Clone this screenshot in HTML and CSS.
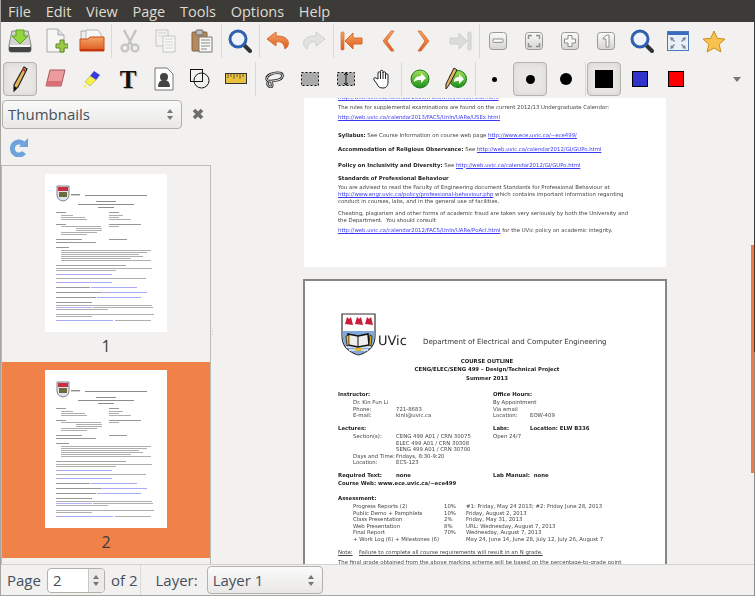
FILE: index.html
```html
<!DOCTYPE html>
<html>
<head>
<title>Xournal</title>
<link rel="stylesheet" href="styles.css">
</head>
<body>
<svg class="defs" width="0" height="0">
  <defs>
    <linearGradient id="orange" x1="0" y1="0" x2="0" y2="1"><stop offset="0" stop-color="#f6a568"/><stop offset="1" stop-color="#dd5a1c"/></linearGradient>
    <linearGradient id="btn" x1="0" y1="0" x2="0" y2="1"><stop offset="0" stop-color="#fbfbfa"/><stop offset="1" stop-color="#d5d4d1"/></linearGradient>
    <linearGradient id="green" x1="0" y1="0" x2="0" y2="1"><stop offset="0" stop-color="#a6e05a"/><stop offset="1" stop-color="#1a8f1a"/></linearGradient>
    <symbol id="thumb" viewBox="0 0 122 158">
      <rect width="122" height="158" fill="#fff"/>
      <path d="M12 12h12v9q0 5-6 6q-6-1-6-6z" fill="#dfe4ee" stroke="#555" stroke-width=".7"/>
      <rect x="13" y="13" width="10" height="4" fill="#c9303f"/>
      <rect x="14" y="18" width="8" height="5" fill="#6f6a3c"/>
      <g fill="#8c8c8c">
        <rect x="26" y="20" width="9" height="1.4"/><rect x="40" y="21" width="62" height="1"/>
        <rect x="51" y="27" width="20" height="1"/><rect x="33" y="30" width="56" height="1"/><rect x="53" y="33" width="16" height="1"/>
        <rect x="11" y="38" width="10" height=".9"/><rect x="64" y="38" width="10" height=".9"/>
        <rect x="16" y="41" width="12" height=".7"/><rect x="64" y="41" width="14" height=".7"/>
        <rect x="16" y="43" width="24" height=".7"/><rect x="64" y="43" width="10" height=".7"/>
        <rect x="16" y="45" width="26" height=".7"/><rect x="64" y="45" width="22" height=".7"/>
        <rect x="11" y="50" width="10" height=".9"/><rect x="64" y="50" width="32" height=".9"/>
        <rect x="16" y="52" width="40" height=".7"/><rect x="64" y="52" width="10" height=".7"/>
        <rect x="31" y="54" width="26" height=".7"/><rect x="31" y="56" width="26" height=".7"/>
        <rect x="16" y="58" width="36" height=".7"/><rect x="16" y="60" width="26" height=".7"/>
        <rect x="11" y="65" width="26" height=".9"/><rect x="64" y="65" width="18" height=".9"/>
        <rect x="11" y="68" width="40" height=".9"/><rect x="11" y="73" width="13" height=".9"/>
        <rect x="16" y="76" width="90" height=".7"/><rect x="16" y="78" width="86" height=".7"/>
        <rect x="16" y="80" width="78" height=".7"/><rect x="16" y="82" width="82" height=".7"/>
        <rect x="16" y="84" width="70" height=".7"/><rect x="16" y="86" width="90" height=".7"/>
        <rect x="11" y="91" width="70" height=".8"/><rect x="11" y="94" width="96" height=".7"/>
        <rect x="11" y="96" width="60" height=".7"/>
        <rect x="11" y="104" width="90" height=".7"/>
        <rect x="11" y="113" width="34" height=".9"/><rect x="11" y="118" width="46" height=".9"/><rect x="11" y="123" width="40" height=".9"/>
        <rect x="11" y="128" width="36" height=".9"/>
        <rect x="11" y="131" width="96" height=".7"/><rect x="48" y="133" width="60" height=".7"/><rect x="11" y="135" width="52" height=".7"/>
        <rect x="11" y="140" width="98" height=".7"/><rect x="11" y="142" width="36" height=".7"/>
        <rect x="70" y="146" width="36" height=".7"/>
      </g>
      <g fill="#a9a9fa">
        <rect x="11" y="100" width="56" height="1"/><rect x="11" y="108" width="56" height="1"/>
        <rect x="46" y="113" width="46" height="1"/><rect x="56" y="118" width="46" height="1"/><rect x="52" y="123" width="44" height="1"/>
        <rect x="11" y="133" width="36" height=".9"/><rect x="11" y="146" width="57" height="1"/>
      </g>
    </symbol>
  </defs>
</svg>

<div class="app">
  <div class="menubar">
    <span>File</span><span>Edit</span><span>View</span><span>Page</span><span>Tools</span><span>Options</span><span>Help</span>
  </div>

  <div class="toolbar">
    <div class="tool"><svg width="26" height="26"><path d="M5 3h16l3 14v5a2 2 0 0 1-2 2H4a2 2 0 0 1-2-2v-5z" fill="#d3d4cf" stroke="#8a8b86"/><rect x="2" y="18" width="22" height="6" rx="2" fill="#444"/><rect x="3" y="17" width="20" height="2" fill="#f4f4f2"/><path d="M9 2h8v6h4l-8 8-8-8h4z" fill="#93d63f" stroke="#5f9e1c"/></svg></div>
    <div class="tool"><svg width="24" height="26"><path d="M3 1h11l6 6v17H3z" fill="#f6f6f5" stroke="#aaa"/><path d="M14 1v6h6" fill="#ddd" stroke="#aaa"/><path d="M16 12h4v4h4v4h-4v4h-4v-4h-4v-4h4z" fill="#9ccb4a" stroke="#5f8c1f"/></svg></div>
    <div class="tool"><svg width="26" height="24"><path d="M2 2h8l2 3v10H2z" fill="#ededeb" stroke="#aaa"/><path d="M7 1h12l3 4v10H7z" fill="#f8f8f6" stroke="#b5b5b0"/><path d="M1 10h8l2-2h14v14H1z" fill="url(#orange)" stroke="#c94a16"/><rect x="1" y="20" width="24" height="2" fill="#c8360f"/></svg></div>
    <i class="sep"></i>
    <div class="tool"><svg width="20" height="24" fill="none" stroke="#c4c4c1" stroke-width="2.4"><path d="M4 1l8 15M16 1L8 16"/><circle cx="5" cy="19" r="3.4"/><circle cx="15" cy="19" r="3.4"/></svg></div>
    <div class="tool"><svg width="22" height="24"><path d="M1 1h12v16H1z" fill="#f2f2f0" stroke="#c4c4c1"/><path d="M8 7h12v16H8z" fill="#f8f8f6" stroke="#c4c4c1"/><path d="M3 4h8M3 7h4M10 10h8M10 13h8M10 16h8M10 19h8" stroke="#d2d2cf"/></svg></div>
    <div class="tool"><svg width="22" height="24"><rect x="1" y="3" width="15" height="19" rx="1" fill="#b5895c" stroke="#80603c"/><rect x="5" y="1" width="7" height="5" rx="1" fill="#bdbdba" stroke="#666"/><path d="M8 8h13v15H8z" fill="#f8f8f6" stroke="#777"/><path d="M10 11h9M10 14h9M10 17h9M10 20h6" stroke="#888"/></svg></div>
    <i class="sep"></i>
    <div class="tool"><svg width="24" height="24"><path d="M15 15l7 7" stroke="#333" stroke-width="4" stroke-linecap="round"/><circle cx="10" cy="10" r="8" fill="#eef3fb" stroke="#2f5fb0" stroke-width="3"/></svg></div>
    <i class="sep"></i>
    <div class="tool"><svg width="24" height="20"><path d="M10 1L1 8l9 7v-4c5-1 8 1 9 7 3-2 4-5 3-8-2-4-6-5-12-5z" fill="url(#orange)" stroke="#d86a2c"/></svg></div>
    <div class="tool"><svg width="24" height="20"><path d="M14 1l9 7-9 7v-4c-5-1-8 1-9 7-3-2-4-5-3-8 2-4 6-5 12-5z" fill="#e2e2df" stroke="#cfcfcc"/></svg></div>
    <i class="sep"></i>
    <div class="tool"><svg width="24" height="20"><rect x="1" y="1" width="3" height="18" rx="1" fill="url(#orange)" stroke="#d86a2c" stroke-width=".7"/><path d="M13 2L5 10l8 8v-5h9V7h-9z" fill="url(#orange)" stroke="#d86a2c"/></svg></div>
    <div class="tool"><svg width="14" height="22"><path d="M10 1L2 11l8 10h3L6 11l7-10z" fill="url(#orange)" stroke="#d86a2c" stroke-width=".8"/></svg></div>
    <div class="tool"><svg width="14" height="22"><path d="M4 1l8 10-8 10H1l7-10L1 1z" fill="url(#orange)" stroke="#d86a2c" stroke-width=".8"/></svg></div>
    <div class="tool"><svg width="24" height="20"><rect x="20" y="1" width="3" height="18" rx="1" fill="#dcdcd9" stroke="#cfcfcc"/><path d="M11 2l8 8-8 8v-5H2V7h9z" fill="#dcdcd9" stroke="#cfcfcc"/></svg></div>
    <i class="sep"></i>
    <div class="tool"><svg width="18" height="18"><rect x=".5" y=".5" width="17" height="17" rx="3" fill="url(#btn)" stroke="#999"/><rect x="4" y="7" width="10" height="3.4" rx=".5" fill="#fafafa" stroke="#8e8e8b"/></svg></div>
    <div class="tool"><svg width="18" height="18" fill="none"><rect x=".5" y=".5" width="17" height="17" rx="3" fill="url(#btn)" stroke="#999"/><path d="M7 3.500H3.500V7M11 3.500h3.500V7M7 14.500H3.500V11M11 14.500h3.500V11" stroke="#8e8e8b" stroke-width="1.400"/></svg></div>
    <div class="tool"><svg width="18" height="18"><rect x=".5" y=".5" width="17" height="17" rx="3" fill="url(#btn)" stroke="#999"/><path d="M7 3.500h4V7h3.500v4H11v3.500H7V11H3.500V7H7z" fill="#fafafa" stroke="#8e8e8b"/></svg></div>
    <div class="tool"><svg width="18" height="18"><rect x=".5" y=".5" width="17" height="17" rx="3" fill="url(#btn)" stroke="#999"/><path d="M6 6l4-3h2v12H9V7H6z" fill="#fafafa" stroke="#8e8e8b"/></svg></div>
    <div class="tool"><svg width="24" height="24"><path d="M15 15l7 7" stroke="#333" stroke-width="4" stroke-linecap="round"/><circle cx="10" cy="10" r="8" fill="#eef3fb" stroke="#2f5fb0" stroke-width="3"/></svg></div>
    <div class="tool"><svg width="22" height="20"><rect x=".5" y=".5" width="21" height="19" fill="#eaf0f8" stroke="#4a78b8"/><rect x="1" y="1" width="20" height="3" fill="#3a6cc0"/><path d="M3 6l4 1-1 1 2 2-1 1-2-2-1 1zM19 6l-1 4-1-1-2 2-1-1 2-2-1-1zM3 18l1-4 1 1 2-2 1 1-2 2 1 1zM19 18l-4-1 1-1-2-2 1-1 2 2 1-1z" fill="#7c8a99"/></svg></div>
    <div class="tool"><svg width="24" height="23"><path d="M12 1l3.300 7.300 7.700.8-5.800 5.200 1.700 7.700-6.900-4-6.900 4 1.700-7.700L1 9.100l7.700-.8z" fill="#f8c24e" stroke="#c98e1c"/></svg></div>
  </div>

  <div class="toolbar">
    <div class="tool active"><svg width="16" height="26"><path d="M12 1l3 2-9 18-4 4 0-6z" fill="#e8b45c" stroke="#222" stroke-width="1.200"/><path d="M11 2l3 2-1 2-3-2z" fill="#b33"/><path d="M2 25l0-5 3 2z" fill="#111"/></svg></div>
    <div class="tool"><svg width="22" height="22"><path d="M5 2h15l-4 16H1z" fill="#eb9a9e" stroke="#a55"/><path d="M1 18l1-5h15l-1 5z" fill="#d96f74"/></svg></div>
    <div class="tool"><svg width="20" height="20"><path d="M12 2l6 4-4 5-6-4z" fill="#3a3ad8"/><path d="M8 7l6 4-6 6-5-4z" fill="#f8f040" stroke="#999" stroke-width=".5"/><path d="M2 15l-1 3 4 1z" fill="#f8f040"/></svg></div>
    <div class="tool"><span class="glyph-t">T</span></div>
    <div class="tool"><svg width="20" height="24"><path d="M1 1h12l6 6v16H1z" fill="#fff" stroke="#777"/><circle cx="10" cy="10" r="4" fill="#444"/><path d="M4 20q0-7 6-7t6 7z" fill="#444"/></svg></div>
    <div class="tool"><svg width="20" height="20" fill="none" stroke="#111"><rect x=".5" y=".5" width="12" height="12"/><circle cx="11.500" cy="11.500" r="7.500"/></svg></div>
    <div class="tool"><svg width="22" height="12"><rect x=".5" y=".5" width="21" height="10" fill="#e8c23c" stroke="#333"/><path d="M3 1v4M6 1v3M9 1v5M12 1v3M15 1v5M18 1v3" stroke="#333" stroke-width=".7"/></svg></div>
    <i class="sep"></i>
    <div class="tool"><svg width="20" height="17" fill="none"><path d="M3 9c-2-5 7-8 13-7 4 1 3 6-2 7-5 1-10 2-11 0zM4 11c-1 2 0 5 3 5 2 0 1-4 0-6" stroke="#222" stroke-width="2.600"/><path d="M3 9c-2-5 7-8 13-7 4 1 3 6-2 7-5 1-10 2-11 0zM4 11c-1 2 0 5 3 5 2 0 1-4 0-6" stroke="#eee" stroke-width="1"/></svg></div>
    <div class="tool"><svg width="18" height="14"><rect x=".5" y=".5" width="17" height="13" fill="#aaa" stroke="#111" stroke-dasharray="2 2"/></svg></div>
    <div class="tool"><svg width="18" height="14"><rect x=".5" y=".5" width="17" height="13" fill="#aaa" stroke="#111" stroke-dasharray="2 2"/><path d="M9 1v12M7 3l2-2 2 2M7 11l2 2 2-2" fill="none" stroke="#111"/></svg></div>
    <div class="tool"><svg width="18" height="20"><path d="M5 10V4a1.200 1.200 0 0 1 2.500 0V2.500a1.200 1.200 0 0 1 2.500 0V4a1.200 1.200 0 0 1 2.500 0v2a1.200 1.200 0 0 1 2.500 0v7c0 4-2 6-5 6s-5-1-6-4l-3-4c-1-2 1-3 2-2z" fill="#fff" stroke="#222"/><path d="M7.500 4v6M10 4v6M12.500 6v4" stroke="#222"/></svg></div>
    <i class="sep"></i>
    <div class="tool"><svg width="20" height="20"><circle cx="10" cy="10" r="9" fill="url(#green)" stroke="#1b7a1b"/><path d="M4 13c0-4 3-6 7-6V4l5 5-5 5v-3c-3 0-5 0-7 2z" fill="#fff"/></svg></div>
    <div class="tool"><svg width="22" height="24"><circle cx="13" cy="12" r="8.500" fill="url(#green)" stroke="#1b7a1b"/><path d="M9 15c0-4 2-5 5-5V7l5 5-5 5v-3c-2 0-4 0-5 1z" fill="#fff"/><path d="M9 1l3 2-8 15-3 4 0-5z" fill="#e8b45c" stroke="#222"/></svg></div>
    <i class="sep"></i>
    <div class="tool"><i class="dot dot-s"></i></div>
    <div class="tool active"><i class="dot dot-m"></i></div>
    <div class="tool"><i class="dot dot-l"></i></div>
    <i class="sep"></i>
    <div class="tool active"><i class="swatch swatch-big black"></i></div>
    <div class="tool"><i class="swatch blue"></i></div>
    <div class="tool"><i class="swatch red"></i></div>
    <i class="more"></i>
  </div>

  <div class="main">
    <div class="sidebar">
      <div class="side-head">
        <div class="combo combo-side"><span>Thumbnails</span><i class="updown"></i></div>
        <svg class="close" width="14" height="14"><path d="M3 3l8 8M11 3l-8 8" stroke="#6d6d6b" stroke-width="3.600"/></svg>
      </div>
      <div class="side-refresh">
        <svg width="20" height="20"><path d="M14 6.500A6.500 6.500 0 1 0 15 15.500" fill="none" stroke="#6fa3dc" stroke-width="5"/><path d="M19 1v9h-9z" fill="#6fa3dc"/></svg>
      </div>
      <div class="thumbs">
        <div class="thumb-item">
          <svg class="thumb" width="122" height="158"><use href="#thumb"/></svg>
          <div class="thumb-label">1</div>
        </div>
        <div class="thumb-item selected">
          <svg class="thumb" width="122" height="158"><use href="#thumb"/></svg>
          <div class="thumb-label">2</div>
        </div>
      </div>
    </div>

    <div class="handle"></div>

    <div class="doc">
      <div class="page page-one">
        <div class="ln link">http://web.uvic.ca/calendar2013/FACS/UnIn/UARe/RoGr.html</div>
        <div class="ln m3">The rules for supplemental examinations are found on the current 2012/13 Undergraduate Calendar:</div>
        <div class="ln m4 link">http://web.uvic.ca/calendar2013/FACS/UnIn/UARe/USEx.html</div>
        <div class="ln m11"><b>Syllabus:</b> See Course Information on course web page <span class="link">http://www.ece.uvic.ca/~ece499/</span></div>
        <div class="ln m8"><b>Accommodation of Religious Observance:</b> See <span class="link">http://web.uvic.ca/calendar2012/GI/GUPo.html</span></div>
        <div class="ln m9"><b>Policy on Inclusivity and Diversity:</b> See <span class="link">http://web.uvic.ca/calendar2012/GI/GUPo.html</span></div>
        <div class="ln m7"><b>Standards of Professional Behaviour</b></div>
        <div class="ln m2">You are advised to read the Faculty of Engineering document Standards for Professional Behaviour at</div>
        <div class="ln m1"><span class="link">http://www.engr.uvic.ca/policy/professional-behaviour.php</span> which contains important information regarding</div>
        <div class="ln">conduct in courses, labs, and in the general use of facilities.</div>
        <div class="ln m6">Cheating, plagiarism and other forms of academic fraud are taken very seriously by both the University and</div>
        <div class="ln">the Department.&nbsp; You should consult</div>
        <div class="ln m4"><span class="link">http://web.uvic.ca/calendar2012/FACS/UnIn/UARe/PoAcI.html</span> for the UVic policy on academic integrity.</div>
      </div>

      <div class="page page-two">
        <div class="letterhead">
          <svg class="crest" width="35" height="43" viewBox="0 0 35 43">
            <path d="M1 1h33v22q0 14-16.500 19Q1 37 1 23z" fill="#fff" stroke="#333" stroke-width="1.200"/>
            <path d="M1.600 18h31.800v5q0 13-15.900 18.400Q1.600 36 1.600 23z" fill="#7fa8dc"/>
            <path d="M5 34h25M8 37h19" stroke="#e4edf8" stroke-width="1.500"/>
            <path d="M4 11l2-7 2 2 2-2 2 8zM14 11l2-7 2 2 2-2 2 8zM24 11l2-7 2 2 2-2 2 8z" fill="#c8203a"/>
            <path d="M7 21l10 2 10-2 1 11-11 2-10-2z" fill="#eee" stroke="#111" stroke-width="1.500"/>
            <path d="M17 23v11" stroke="#111"/>
            <path d="M5 23l3-1v10l-2 1zM29 22l2 1-1 10-2-1z" fill="#e2b62e" stroke="#111" stroke-width=".7"/>
            <path d="M13 35h9l-2 3h-5z" fill="#e2b62e"/>
          </svg>
          <span class="uvic">UVic</span>
          <span class="dept">Department of Electrical and Computer Engineering</span>
        </div>
        <div class="ln m3 center"><b>COURSE OUTLINE</b></div>
        <div class="ln m1 center"><b>CENG/ELEC/SENG 499 &ndash; Design/Technical Project</b></div>
        <div class="ln m3 center"><b>Summer 2013</b></div>

        <div class="ln m9 cols"><b class="c-left">Instructor:</b><b>Office Hours:</b></div>
        <div class="ln m2 cols"><span class="c-left ind">Dr. Kin Fun Li</span><span>By Appointment</span></div>
        <div class="ln cols"><span class="c-left ind"><span class="c-label">Phone:</span>721-8683</span><span>Via email</span></div>
        <div class="ln cols"><span class="c-left ind"><span class="c-label">E-mail:</span>kinli@uvic.ca</span><span class="c-loc">Location:</span><span>EOW-409</span></div>

        <div class="ln m6 cols"><b class="c-left">Lectures:</b><b class="c-loc">Labs:</b><b>Location: ELW B336</b></div>
        <div class="ln m2 cols"><span class="c-left ind"><span class="c-label">Section(s):</span>CENG 499 A01 / CRN 30075</span><span>Open 24/7</span></div>
        <div class="ln cols"><span class="c-left ind"><span class="c-label"></span>ELEC 499 A01 / CRN 30308</span></div>
        <div class="ln cols"><span class="c-left ind"><span class="c-label"></span>SENG 499 A01 / CRN 30700</span></div>
        <div class="ln cols"><span class="c-left ind"><span class="c-label">Days and Time:</span>Fridays, 8:30-9:20</span></div>
        <div class="ln cols"><span class="c-left ind"><span class="c-label">Location:</span>ECS-123</span></div>

        <div class="ln m6 cols"><b class="c-left"><span class="c-req">Required Text:</span>none</b><b>Lab Manual:&nbsp; none</b></div>
        <div class="ln m2"><b>Course Web: www.ece.uvic.ca/~ece499</b></div>

        <div class="ln m8"><b>Assessment:</b></div>
        <div class="ln m2 cols ind"><span class="a-name">Progress Reports (2)</span><span class="a-pct">10%</span><span>#1: Friday, May 24 2013; #2: Friday June 28, 2013</span></div>
        <div class="ln cols ind"><span class="a-name">Public Demo + Pamphlets</span><span class="a-pct">10%</span><span>Friday, August 2, 2013</span></div>
        <div class="ln cols ind"><span class="a-name">Class Presentation</span><span class="a-pct">2%</span><span>Friday, May 31, 2013</span></div>
        <div class="ln cols ind"><span class="a-name">Web Presentation</span><span class="a-pct">8%</span><span>URL: Wednesday, August 7, 2013</span></div>
        <div class="ln cols ind"><span class="a-name">Final Report</span><span class="a-pct">70%</span><span>Wednesday, August 7, 2013</span></div>
        <div class="ln cols ind"><span class="a-name">+ Work Log (6) + Milestones (6)</span><span class="a-pct"></span><span>May 24, June 14, June 28, July 12, July 26, August 7</span></div>

        <div class="ln m7 cols"><u class="note">Note:</u><u>Failure to complete all course requirements will result in an N grade.</u></div>
        <div class="ln m3">The final grade obtained from the above marking scheme will be based on the percentage-to-grade point</div>
      </div>

      <div class="edge-mark"></div>
    </div>
  </div>

  <div class="statusbar">
    <span class="st-page">Page</span>
    <div class="spin"><span>2</span><i class="spin-btn"><i class="updown"></i></i></div>
    <span class="st-of">of 2</span>
    <i class="st-sep"></i>
    <span class="st-layer">Layer:</span>
    <div class="combo combo-layer"><span>Layer 1</span><i class="updown"></i></div>
  </div>
  <div class="edge"></div>
</div>
</body>
</html>
```
FILE: styles.css
```css
html, body {
  margin: 0;
  padding: 0;
  background: #f2f1f0;
}
.defs {
  position: absolute;
}
.app {
  position: relative;
  width: 755px;
  height: 596px;
  display: flex;
  flex-direction: column;
  overflow: hidden;
  box-sizing: border-box;
  border-left: 1px solid #a5a4a0;
  background: #f2f1f0;
  font-family: "Open Sans", "Noto Sans", sans-serif;
  color: #3c3c3c;
}

/* menu */
.menubar {
  height: 22px;
  margin-left: -1px;
  padding-left: 8px;
  flex: none;
  display: flex;
  gap: 14.700px;
  align-items: center;
  background: #3c3b37;
  color: #dfdbd2;
  font-size: 14.500px;
}

/* toolbars */
.toolbar {
  height: 38px;
  flex: none;
  display: flex;
  align-items: center;
  padding-left: 1px;
}
.tool {
  width: 36px;
  height: 36px;
  flex: none;
  display: flex;
  align-items: center;
  justify-content: center;
  box-sizing: border-box;
}
.tool.active {
  width: 34px;
  height: 34px;
  margin: 0 1px;
  border: 1px solid #b4b2ad;
  border-radius: 4px;
  background: #e8e7e5;
  box-shadow: inset 0 0 6px #d5d4d1;
}
.sep {
  width: 1px;
  height: 34px;
  margin: 0 .5px;
  flex: none;
  background: #d9d8d5;
}
.glyph-t {
  font-family: "Liberation Serif", serif;
  font-weight: bold;
  font-size: 25px;
  line-height: 25px;
  color: #111;
  text-shadow: 1px 1px 0 #b8b0a0;
}
.dot {
  display: block;
  border-radius: 50%;
  background: #000;
}
.dot-s { width: 5px; height: 5px; }
.dot-m { width: 9px; height: 9px; }
.dot-l { width: 12px; height: 12px; }
.swatch {
  display: block;
  width: 14px;
  height: 14px;
  border: 1px solid #000;
}
.swatch-big {
  width: 16px;
  height: 16px;
}
.black { background: #000; }
.blue { background: #3333cc; }
.red { background: #ff0000; }
.more {
  margin-left: 39px;
  width: 0;
  height: 0;
  border-left: 4px solid transparent;
  border-right: 4px solid transparent;
  border-top: 5px solid #777;
}

/* main */
.main {
  flex: 1;
  min-height: 0;
  display: flex;
}
.sidebar {
  width: 210px;
  flex: none;
  display: flex;
  flex-direction: column;
}
.side-head {
  height: 32px;
  flex: none;
  display: flex;
  align-items: center;
  padding-left: 1px;
}
.combo {
  display: flex;
  align-items: center;
  justify-content: space-between;
  box-sizing: border-box;
  border: 1px solid #b3b1ac;
  border-radius: 4px;
  background: linear-gradient(#fafafa, #e9e8e6);
  color: #44505c;
  font-size: 15px;
}
.combo-side {
  width: 180px;
  height: 29px;
  padding: 0 7px 0 5px;
}
.updown {
  position: relative;
  display: block;
  width: 7px;
  height: 13px;
}
.updown::before,
.updown::after {
  content: "";
  position: absolute;
  left: 0;
  border-left: 3.500px solid transparent;
  border-right: 3.500px solid transparent;
}
.updown::before {
  top: 1px;
  border-bottom: 4px solid #777;
}
.updown::after {
  bottom: 1px;
  border-top: 4px solid #777;
}
.close {
  margin-left: 9px;
}
.side-refresh {
  height: 35px;
  flex: none;
  padding-left: 8px;
  box-sizing: border-box;
  padding-top: 7px;
}
.thumbs {
  flex: 1;
  min-height: 0;
  overflow: hidden;
  border-top: 1px solid #bdbbb6;
  border-left: 1px solid #bdbbb6;
  border-right: 1px solid #bdbbb6;
}
.thumb-item {
  height: 196px;
  padding-top: 8px;
  box-sizing: border-box;
  text-align: center;
}
.thumb-item.selected {
  background: #f08149;
}
.thumb {
  display: block;
  margin: 0 auto;
  filter: blur(.4px);
}
.thumb-label {
  font-size: 16px;
  line-height: 28px;
  color: #3c3c3c;
}
.handle {
  position: relative;
  width: 2px;
  flex: none;
}
.handle::after {
  content: "";
  position: absolute;
  top: 230px;
  left: 1px;
  width: 4px;
  height: 8px;
  background: repeating-linear-gradient(#cfcecb 0, #cfcecb 1px, transparent 1px, transparent 3px);
}

/* document */
.doc {
  position: relative;
  flex: 1;
  min-width: 0;
  padding-left: 90px;
  overflow: hidden;
  background: #f2f1f0;
  font-family: "DejaVu Sans", sans-serif;
  font-size: 5.360px;
  text-rendering: geometricPrecision;
  color: #444;
}
.page {
  box-sizing: border-box;
  background: #fff;
  overflow: hidden;
  white-space: nowrap;
  filter: blur(.3px);
}
.page-one {
  width: 362px;
  height: 174px;
  margin-top: -5px;
  margin-left: 1px;
  padding: 2px 0 0 34px;
}
.page-two {
  width: 364px;
  height: 300px;
  margin-top: 12px;
  border: 2px solid #868686;
  border-bottom: 0;
  padding-left: 33px;
}
.ln {
  height: 6.500px;
  line-height: 6.500px;
}
.ln b {
  color: #222;
}
.link {
  color: #3a3af5;
  text-decoration: underline;
}
.m1 { margin-top: 1px; }
.m2 { margin-top: 2px; }
.m3 { margin-top: 3px; }
.m4 { margin-top: 4px; }
.m6 { margin-top: 6px; }
.m7 { margin-top: 7px; }
.m8 { margin-top: 8px; }
.m9 { margin-top: 9px; }
.m11 { margin-top: 11px; }
.center {
  width: 298px;
  text-align: center;
}
.letterhead {
  height: 43px;
  margin-top: 32px;
  margin-left: 3px;
  display: flex;
  align-items: flex-end;
}
.crest {
  flex: none;
}
.uvic {
  width: 45px;
  margin-left: 2px;
  padding-bottom: 8px;
  font-size: 13px;
  line-height: 13px;
  color: #222;
}
.dept {
  padding-bottom: 10px;
  font-size: 7.050px;
  line-height: 9px;
  color: #333;
}
.cols {
  display: flex;
}
.c-left {
  width: 155px;
  flex: none;
}
.c-left.ind {
  width: 140px;
  margin-left: 15px;
}
.ind {
  margin-left: 15px;
}
.c-label {
  display: inline-block;
  width: 43px;
}
.c-req {
  display: inline-block;
  width: 58px;
}
.c-loc {
  width: 37px;
  flex: none;
}
.a-name {
  width: 91px;
  flex: none;
}
.a-pct {
  width: 22px;
  flex: none;
}
.note {
  width: 21px;
  flex: none;
}
.edge {
  position: absolute;
  top: 22px;
  bottom: 0;
  right: 0;
  width: 1px;
  background: linear-gradient(#3c3b37 0, #3c3b37 330px, #8f8e8a 330px);
}
.edge-mark {
  position: absolute;
  top: 147px;
  right: 1px;
  width: 3px;
  height: 228px;
  background: #ee7a4c;
}

/* status bar */
.statusbar {
  height: 32px;
  flex: none;
  box-sizing: border-box;
  display: flex;
  align-items: center;
  border-top: 1px solid #d3d2cf;
  border-bottom: 1px solid #a5a4a0;
  padding-left: 6px;
  font-size: 15px;
  color: #44505c;
}
.spin {
  width: 58px;
  height: 25px;
  margin-left: 6px;
  flex: none;
  box-sizing: border-box;
  display: flex;
  justify-content: space-between;
  border: 1px solid #b3b1ac;
  border-radius: 4px;
  background: #fff;
  overflow: hidden;
  line-height: 23px;
  padding-left: 5px;
}
.spin-btn {
  display: flex;
  align-items: center;
  justify-content: center;
  width: 15px;
  border-left: 1px solid #c9c8c4;
  background: #ecebe9;
}
.st-of {
  margin-left: 6px;
}
.st-sep {
  width: 1px;
  height: 30px;
  margin: 0 14px 0 3px;
  background: #dcdbd8;
}
.combo-layer {
  width: 116px;
  height: 28px;
  margin-left: 9px;
  padding: 0 7px 0 5px;
}
```
